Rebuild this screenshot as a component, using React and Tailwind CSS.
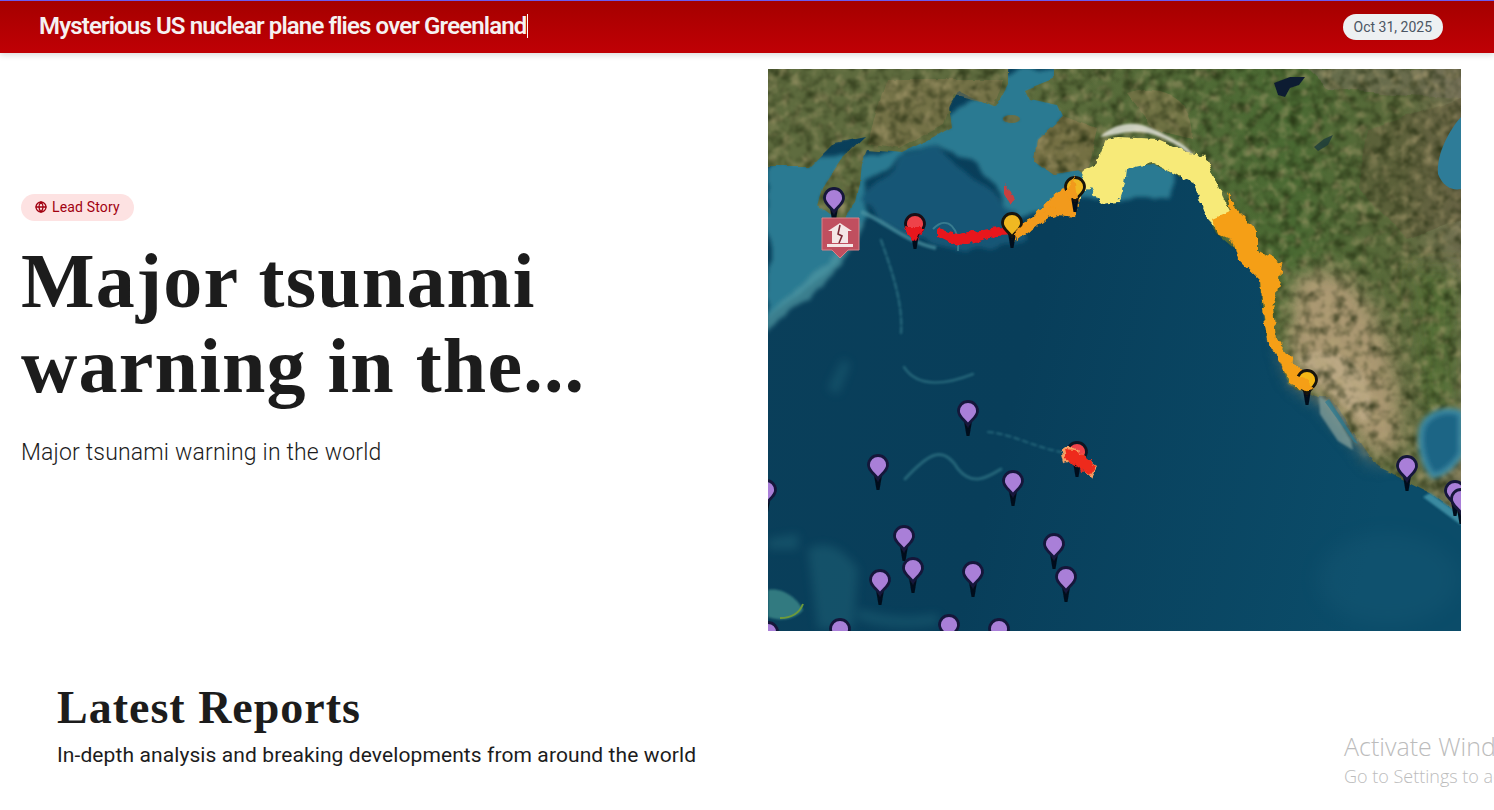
import React from "react";
import { Globe } from "lucide-react";

const sans = "font-['Roboto','Liberation_Sans',sans-serif]";
const serif = "font-['Liberation_Serif','DejaVu_Serif',serif]";

function Pin({ x, y, fill = "#a97fd8", stroke = "#14183a" }) {
  const cx = x - 768;
  const cy = y - 69;
  return (
    <g>
      <path d={`M${cx - 4} ${cy + 10} L${cx - 1.5} ${cy + 25} L${cx + 1.5} ${cy + 25} L${cx + 4} ${cy + 10} Z`} fill="#060f1d" />
      <path
        d={`M${cx} ${cy + 14} C${cx - 3} ${cy + 9} ${cx - 9.5} ${cy + 6} ${cx - 9.5} ${cy} A9.5 9.5 0 1 1 ${cx + 9.5} ${cy} C${cx + 9.5} ${cy + 6} ${cx + 3} ${cy + 9} ${cx} ${cy + 14} Z`}
        fill={fill}
        stroke={stroke}
        strokeWidth="2.8"
      />
    </g>
  );
}

function TsunamiMap() {
  const purple = [
    [834, 198], [968, 411], [878, 465], [1013, 481], [904, 536], [913, 568], [880, 580],
    [973, 572], [1054, 544], [1066, 577], [949, 625], [999, 629], [840, 629], [768, 632],
    [1407, 466], [1455, 491], [1461, 499], [766, 490],
  ];
  return (
    <svg viewBox="0 0 693 562" width="693" height="562" className="block shrink-0">
      <defs>
        <filter id="b05"><feGaussianBlur stdDeviation="0.5" /></filter>
        <filter id="b1"><feGaussianBlur stdDeviation="1" /></filter>
        <filter id="b2" x="-20%" y="-20%" width="140%" height="140%"><feGaussianBlur stdDeviation="2.5" /></filter>
        <filter id="b4" x="-40%" y="-40%" width="180%" height="180%"><feGaussianBlur stdDeviation="5" /></filter>
        <filter id="b8" x="-60%" y="-60%" width="220%" height="220%"><feGaussianBlur stdDeviation="10" /></filter>
        <filter id="terrain" x="0" y="0" width="100%" height="100%" colorInterpolationFilters="sRGB">
          <feTurbulence type="fractalNoise" baseFrequency="0.03" numOctaves="4" seed="3" result="n" />
          <feDisplacementMap in="SourceGraphic" in2="n" scale="7" xChannelSelector="R" yChannelSelector="G" result="d" />
          <feTurbulence type="fractalNoise" baseFrequency="0.09" numOctaves="4" seed="8" result="n2" />
          <feColorMatrix in="n2" values="0 0 0 0 0.12  0 0 0 0 0.16  0 0 0 0 0.05  1.7 0 0 0 -0.72" result="dark" />
          <feColorMatrix in="n2" values="0 0 0 0 0.7  0 0 0 0 0.64  0 0 0 0 0.46  0 1.5 0 0 -0.72" result="light" />
          <feMerge result="tex"><feMergeNode in="dark" /><feMergeNode in="light" /></feMerge>
          <feComposite in="tex" in2="d" operator="in" result="texIn" />
          <feGaussianBlur in="texIn" stdDeviation="0.9" result="texSoft" />
          <feMerge><feMergeNode in="d" /><feMergeNode in="texSoft" /></feMerge>
        </filter>
        <filter id="jag" x="-5%" y="-5%" width="110%" height="110%">
          <feTurbulence type="fractalNoise" baseFrequency="0.14" numOctaves="2" seed="5" result="n" />
          <feDisplacementMap in="SourceGraphic" in2="n" scale="7" xChannelSelector="R" yChannelSelector="G" />
        </filter>
        <filter id="wobble" x="-5%" y="-5%" width="110%" height="110%">
          <feTurbulence type="fractalNoise" baseFrequency="0.03" numOctaves="3" seed="11" result="n" />
          <feDisplacementMap in="SourceGraphic" in2="n" scale="14" xChannelSelector="R" yChannelSelector="G" />
          <feGaussianBlur stdDeviation="2.2" />
        </filter>
        <linearGradient id="sea" x1="0" y1="0" x2="1" y2="0.2">
          <stop offset="0" stopColor="#0a3f5a" />
          <stop offset="0.45" stopColor="#083e5a" />
          <stop offset="1" stopColor="#0b4c69" />
        </linearGradient>
        <linearGradient id="north" x1="0" y1="0" x2="1" y2="0">
          <stop offset="0" stopColor="#5d6c3d" />
          <stop offset="0.6" stopColor="#4a6a33" />
          <stop offset="0.85" stopColor="#5c6a3c" />
          <stop offset="1" stopColor="#7a7458" />
        </linearGradient>
      </defs>

      <rect width="693" height="562" fill="url(#sea)" />

      {/* shallow seas */}
      <g filter="url(#wobble)">
        <path d="M0 90 L120 85 L250 0 L420 0 L400 130 L300 130 L247 150 L205 90 L170 75 L135 88 L100 110 L95 150 L60 205 L0 248 Z" fill="#2a7a92" />
        <path d="M93 128 L133 91 L170 75 L207 114 L247 143 L258 170 L200 182 L150 172 L110 150 Z" fill="#195676" />
        <path d="M0 245 L60 195 L90 152 L94 160 L62 210 L0 262 Z" fill="#5098a4" opacity="0.7" />
        <path d="M345 128 L385 96 L400 102 L372 112 L352 132 Z" fill="#2c7a92" />
      </g>
      <path d="M93 143 C115 150 135 172 168 179" fill="none" stroke="#4c93a2" strokeWidth="4" opacity="0.7" filter="url(#b1)" />
      <path d="M165 160 C180 145 192 160 190 182" fill="none" stroke="#5aa0a8" strokeWidth="2" opacity="0.5" filter="url(#b05)" />

      {/* seamount chains */}
      <g fill="none" stroke="#3f8a96" strokeLinecap="round" filter="url(#b1)" opacity="0.5">
        <path d="M113 171 C125 205 135 235 133 264" strokeWidth="2.5" strokeDasharray="6 3" />
        <path d="M136 298 C150 320 180 315 205 305" strokeWidth="2.5" />
        <path d="M220 363 C245 365 265 378 293 383" strokeWidth="2" strokeDasharray="5 4" />
        <path d="M137 410 C160 385 175 375 190 400 C205 418 220 408 233 400" strokeWidth="3" />
      </g>
      <g fill="#2c7585" opacity="0.35" filter="url(#b4)">
        <path d="M60 320 L75 290 L82 295 L70 325 Z" />
        <path d="M0 470 L30 465 L30 480 L0 480 Z" />
        <path d="M40 480 C60 470 75 480 90 500 L85 560 L50 560 Z" />
        <path d="M90 540 C120 548 140 550 170 545 L170 555 C140 560 110 558 90 550 Z" />
      </g>
      <path d="M0 521 C15 518 30 530 35 541 C25 552 10 552 0 548 Z" fill="#337a80" filter="url(#b1)" />
      <path d="M12 549 C22 549 31 545 35 535" fill="none" stroke="#6d9a3a" strokeWidth="2" filter="url(#b05)" />
      <ellipse cx="620" cy="510" rx="70" ry="45" fill="#2a708a" opacity="0.15" filter="url(#b8)" />

      {/* land */}
      <g filter="url(#terrain)">
        <path
          d="M-10 -10 L240 -10 L240 14 L227 38 L190 21 L180 38 L183 58 L160 71 L133 84 L100 81 L94 95 L92 115 L88 134 L73 153 L50 136 L55 118 L73 91 L97 68 L67 74 L43 98 L-10 98 Z"
          fill="#5f6c3f"
        />
        <path d="M120 10 L235 10 L225 35 L185 25 L175 55 L130 80 L100 75 Z" fill="#85794f" opacity="0.55" />
        <ellipse cx="243" cy="51" rx="8" ry="4" fill="#6a7048" />
        <path
          d="M287 -10 L703 -10 L703 454 L662 424 L609 398 L562 328 L549 328 L522 314 L499 271 L492 211 L469 181 L449 164 L442 148 L425 114 L385 94 L349 98 L342 124 L310 101 L285 105 L267 92 L270 70 L295 47 L290 36 L262 30 L257 20 L287 8 Z"
          fill="url(#north)"
        />
        <path d="M270 70 L295 47 L330 60 L320 100 L285 105 L267 92 Z" fill="#7d7147" opacity="0.75" />
        <path d="M360 25 C400 10 430 40 425 70 L385 60 Z" fill="#86794e" opacity="0.55" />
        <path d="M600 60 L693 30 L693 150 L640 170 L590 120 Z" fill="#5f5a3a" opacity="0.55" />
        <path d="M540 0 L693 0 L693 30 L560 20 Z" fill="#75705a" opacity="0.6" />
        <g filter="url(#b8)">
          <path d="M525 215 C545 190 585 195 605 240 C625 275 640 340 632 385 L610 392 C575 350 545 322 525 305 L515 270 Z" fill="#ab9872" />
          <path d="M645 200 L693 200 L693 340 L655 350 Z" fill="#4b7030" opacity="0.7" />
        </g>
        <path d="M530 290 C555 270 590 285 605 330 L600 355 C580 340 550 310 535 298 Z" fill="#c6b391" opacity="0.6" filter="url(#b2)" />
      </g>
      {/* lakes */}
      <path d="M506 14 L522 8 L537 8 L531 16 L522 19 L517 28 L510 26 Z" fill="#0e1f30" filter="url(#b05)" />
      <path d="M546 78 L556 70 L565 66 L560 76 L550 82 Z" fill="#1f3a3a" opacity="0.8" filter="url(#b05)" />
      {/* hudson bay */}
      <path d="M693 48 C682 60 668 85 670 105 C675 118 685 122 693 120 Z" fill="#2e7c98" filter="url(#b05)" />
      {/* baja */}
      <path d="M551 327 L561 333 L583 372 L585 381 L570 372 L552 345 Z" fill="#7d9a96" opacity="0.8" filter="url(#b1)" />
      <path d="M561 330 L590 375 L586 373 L557 333 Z" fill="#2c7a92" opacity="0.7" filter="url(#b05)" />
      {/* gulf of mexico */}
      <path d="M693 344 C675 338 660 345 654 358 C650 375 655 395 665 407 C675 405 685 398 693 385 Z" fill="#1a6585" stroke="#3d8ca5" strokeWidth="5" filter="url(#b2)" />
      <path d="M662 424 L693 446 L693 456 L655 428 Z" fill="#3a8aa0" filter="url(#b1)" />
      {/* snow */}
      <path d="M332 68 C345 55 365 50 385 60 C405 70 420 75 428 90 L412 78 C395 68 375 58 350 65 Z" fill="#e8e8e0" opacity="0.8" filter="url(#b1)" />
      <path d="M492 186 L505 190 L507 200 L496 202 Z" fill="#9b9b92" filter="url(#b1)" />

      {/* tsunami warning bands */}
      <g filter="url(#jag)">
        <path d="M237 115 L241 120 L246 130 L243 136 L237 126 Z" fill="#c7403f" />
        <path d="M170 160 L190 165 L215 160 L232 158 L245 160 L246 166 L230 167 L195 176 L180 172 L170 167 Z" fill="#e8151c" />
        <path d="M136 158 L155 158 L150 172 L140 168 Z" fill="#e8151c" />
        <path d="M243 160 L262 150 L275 136 L295 120 L307 106 L313 117 L308 148 L290 146 L265 155 L245 172 Z" fill="#f29a1a" />
        <path
          d="M303 128 L318 100 L328 95 L338 70 L350 68 L390 70 L420 84 L437 86 L452 122 L462 142 L447 157 L440 150 L425 114 L385 94 L358 100 L356 115 L350 133 L333 135 L322 119 L308 132 Z"
          fill="#f7ea78"
        />
        <path
          d="M459 124 L472 144 L489 161 L489 181 L514 194 L512 211 L505 238 L508 270 L530 298 L546 312 L537 322 L522 314 L510 290 L499 271 L495 240 L492 211 L470 190 L465 172 L450 165 L444 150 L462 142 Z"
          fill="#f59f17"
        />
      </g>

      {/* pins */}
      <g filter="url(#b05)">
        {purple.map(([x, y], i) => <Pin key={i} x={x} y={y} />)}
        <Pin x={915} y={224} fill="#ee4248" stroke="#1a1014" />
        <Pin x={1077} y={452} fill="#ee4248" stroke="#0c1424" />
        <Pin x={1012} y={223} fill="#f0b820" stroke="#16120c" />
        <Pin x={1075} y={187} fill="#f0b820" stroke="#16120c" />
        <Pin x={1307} y={380} fill="#f5b812" stroke="#16120c" />
      </g>

      {/* bands lying over pins */}
      <g filter="url(#jag)">
        <path d="M247 160 L265 152 L282 138 L290 140 L270 156 L249 172 Z" fill="#f29a1a" />
        <path d="M298 122 L306 108 L309 130 L300 132 Z" fill="#f29a1a" />
        <path d="M524 305 L537 310 L545 320 L537 322 L526 316 Z" fill="#f59f17" />
        <path d="M136 158 L155 158 L148 172 L140 168 Z" fill="#e8151c" />
        <path d="M293 381 L300 376 L309 381 L318 389 L329 397 L323 408 L313 399 L303 392 L296 394 Z" fill="#f6a063" />
        <path d="M296 380 L306 381 L318 388 L328 397 L322 406 L310 398 L298 390 Z" fill="#ee2a1c" />
      </g>

      {/* evacuation marker */}
      <g filter="url(#b05)">
        <path d="M54 149 H91 V181 H80 L72 189 L64 181 H54 Z" fill="#c0505e" stroke="#d88088" strokeWidth="1" />
        <path d="M60 162 L72 154 L84 162 L80 162 L80 174 L64 174 L64 162 Z" fill="#f4e6e6" />
        <path d="M59 175 H85 V178 H59 Z" fill="#f4e6e6" />
        <path d="M72 156 L70 165 L74 167 L71 174" fill="none" stroke="#7c2a36" strokeWidth="1.6" />
      </g>
    </svg>
  );
}

export default function App() {
  return (
    <div className={`relative h-screen w-full overflow-hidden bg-white ${sans}`}>
      <header className="relative z-10 flex h-[53px] items-center justify-between border-t border-[#6a5cf0] bg-gradient-to-b from-[#a50000] to-[#c00005] pl-[39px] pr-[51px] shadow-[0_2px_6px_rgba(0,0,0,0.15)]">
        <div className="-mt-[3px] flex items-center text-[24px] font-semibold tracking-[-0.86px] text-[#f6f1f1]">
          <span>Mysterious US nuclear plane flies over Greenland</span>
          <span className="ml-px h-[24px] w-px bg-white" />
        </div>
        <span className="-mt-px rounded-full bg-[#edf0f2] px-[11px] py-[3px] text-[14px] leading-[20px] text-[#4b5563]">
          Oct 31, 2025
        </span>
      </header>

      <main className="flex h-[578px] items-center justify-between pl-[21px] pr-[33px] pt-4">
        <div className="flex flex-col items-start pb-[38px]">
          <span className="mb-[17px] flex h-[27px] items-center gap-[5px] rounded-full bg-[#fde2e2] px-[14px] text-[14px] tracking-[0.15px] text-[#a10010]">
            <Globe size={12} strokeWidth={2.6} />
            Lead Story
          </span>
          <h1 className={`text-[78px] font-bold leading-[85px] tracking-[1.2px] text-[#1c1c1c] ${serif}`}>
            Major tsunami
            <br />
            warning in the...
          </h1>
          <p className="mt-[29px] text-[23px] font-light leading-[32px] tracking-[0.17px] text-[#1c1c1c]">
            Major tsunami warning in the world
          </p>
        </div>
        <TsunamiMap />
      </main>

      <section className="pl-[57px] pt-[51px]">
        <h2 className={`text-[46px] font-bold leading-[52px] tracking-[1px] text-[#1c1c1c] ${serif}`}>Latest Reports</h2>
        <p className="mt-[6px] text-[21px] leading-[30px] tracking-[0.1px] text-[#1c1c1c]">
          In-depth analysis and breaking developments from around the world
        </p>
      </section>

      <div className="absolute left-[1344px] top-[730px] whitespace-nowrap font-['Open_Sans',sans-serif] font-light text-[#bcbcbc]">
        <div className="text-[25px] leading-[33px]">Activate Windows</div>
        <div className="text-[18px] leading-[26px]">Go to Settings to activate Windows.</div>
      </div>
    </div>
  );
}
